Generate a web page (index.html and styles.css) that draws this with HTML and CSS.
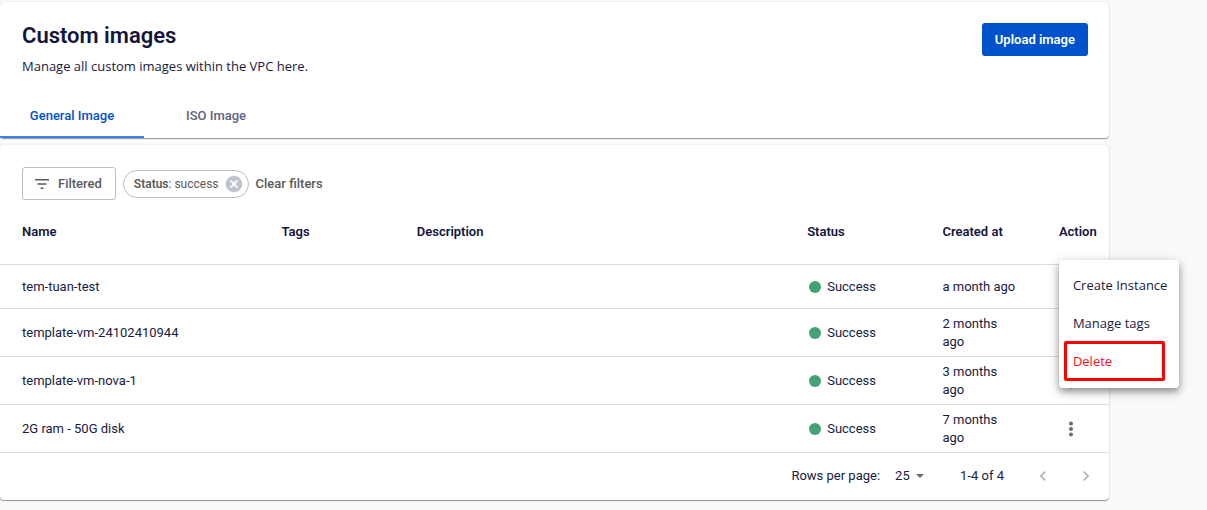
FILE: index.html
```html
<!DOCTYPE html>
<html lang="en">
<head>
  <meta charset="UTF-8">
  <meta name="viewport" content="width=device-width, initial-scale=1.0">
  <title>Custom images</title>
  <link rel="stylesheet" href="styles.css">
</head>
<body>
  <main class="page">
    <!-- Header -->
    <section class="card">
      <div class="header">
        <div>
          <h1>Custom images</h1>
          <p>Manage all custom images within the VPC here.</p>
        </div>
        <button class="btn-primary" type="button">Upload image</button>
      </div>
      <nav class="tabs">
        <a class="tab active" href="#general">General Image</a>
        <a class="tab" href="#iso">ISO Image</a>
      </nav>
    </section>

    <!-- Image list -->
    <section class="card">
      <div class="filters">
        <button class="btn-filter" type="button">
          <svg width="16" height="16" viewBox="0 0 16 16" fill="currentColor"><path d="M1 3h14v1.500H1zM3.500 7.200h9v1.500h-9zM6.500 11.500h3v1.500h-3z"/></svg>
          Filtered
        </button>
        <div class="chip">
          <span><b>Status</b>: success</span>
          <button class="chip-remove" type="button" aria-label="Remove filter">
            <svg width="18" height="18" viewBox="0 0 24 24" fill="currentColor"><path d="M12 1C5.900 1 1 5.900 1 12s4.900 11 11 11 11-4.900 11-11S18.100 1 12 1zm5.500 14.900l-1.600 1.600L12 13.600l-3.900 3.900-1.600-1.600 3.900-3.900-3.900-3.900 1.600-1.600 3.900 3.900 3.900-3.900 1.600 1.600-3.900 3.900z"/></svg>
          </button>
        </div>
        <button class="btn-text" type="button">Clear filters</button>
      </div>

      <table>
        <colgroup>
          <col class="col-name">
          <col class="col-tags">
          <col class="col-desc">
          <col class="col-status">
          <col class="col-created">
          <col>
        </colgroup>
        <thead>
          <tr>
            <th>Name</th>
            <th>Tags</th>
            <th>Description</th>
            <th>Status</th>
            <th>Created at</th>
            <th>Action</th>
          </tr>
        </thead>
        <tbody>
          <tr>
            <td>tem-tuan-test</td>
            <td></td>
            <td></td>
            <td><span class="status">Success</span></td>
            <td>a month ago</td>
            <td class="action">
              <button class="more" type="button" aria-label="Actions"><svg width="24" height="24" viewBox="0 0 24 24" fill="currentColor"><circle cx="12" cy="6.500" r="2"/><circle cx="12" cy="12" r="2"/><circle cx="12" cy="17.500" r="2"/></svg></button>
              <div class="menu">
                <button type="button">Create Instance</button>
                <button type="button">Manage tags</button>
                <button class="delete" type="button">Delete</button>
              </div>
            </td>
          </tr>
          <tr>
            <td>template-vm-24102410944</td>
            <td></td>
            <td></td>
            <td><span class="status">Success</span></td>
            <td>2 months ago</td>
            <td><button class="more" type="button" aria-label="Actions"><svg width="24" height="24" viewBox="0 0 24 24" fill="currentColor"><circle cx="12" cy="6.500" r="2"/><circle cx="12" cy="12" r="2"/><circle cx="12" cy="17.500" r="2"/></svg></button></td>
          </tr>
          <tr>
            <td>template-vm-nova-1</td>
            <td></td>
            <td></td>
            <td><span class="status">Success</span></td>
            <td>3 months ago</td>
            <td><button class="more" type="button" aria-label="Actions"><svg width="24" height="24" viewBox="0 0 24 24" fill="currentColor"><circle cx="12" cy="6.500" r="2"/><circle cx="12" cy="12" r="2"/><circle cx="12" cy="17.500" r="2"/></svg></button></td>
          </tr>
          <tr>
            <td>2G ram - 50G disk</td>
            <td></td>
            <td></td>
            <td><span class="status">Success</span></td>
            <td>7 months ago</td>
            <td><button class="more" type="button" aria-label="Actions"><svg width="24" height="24" viewBox="0 0 24 24" fill="currentColor"><circle cx="12" cy="6.500" r="2"/><circle cx="12" cy="12" r="2"/><circle cx="12" cy="17.500" r="2"/></svg></button></td>
          </tr>
        </tbody>
      </table>

      <!-- Pagination -->
      <div class="pagination">
        <label for="rows">Rows per page:</label>
        <div class="select">
          <select id="rows">
            <option>10</option>
            <option selected>25</option>
            <option>50</option>
          </select>
          <svg width="8" height="4" viewBox="0 0 8 4" fill="currentColor"><path d="M0 0h8L4 4z"/></svg>
        </div>
        <span class="range">1-4 of 4</span>
        <button class="arrow" type="button" aria-label="Previous page" disabled><svg width="20" height="20" viewBox="0 0 24 24" fill="currentColor"><path d="M15.400 7.400L14 6l-6 6 6 6 1.400-1.400L10.800 12z"/></svg></button>
        <button class="arrow" type="button" aria-label="Next page" disabled><svg width="20" height="20" viewBox="0 0 24 24" fill="currentColor"><path d="M8.600 16.600L10 18l6-6-6-6-1.400 1.400L13.200 12z"/></svg></button>
      </div>
    </section>
  </main>
</body>
</html>
```
FILE: styles.css
```css
* {
  box-sizing: border-box;
}
body {
  margin: 0;
  background-color: #fafafa;
  color: #172042;
  font-family: Roboto, sans-serif;
  font-size: 13px;
  line-height: 18px;
}
button {
  font: inherit;
  color: inherit;
  background: none;
  border: none;
  padding: 0;
  cursor: pointer;
}
svg {
  display: block;
}
.page {
  display: flex;
  flex-direction: column;
  gap: 7px;
  margin-right: 98px;
  padding: 2px 0 10px;
}
.card {
  background-color: #fff;
  border-radius: 4px;
  box-shadow: 0 1px 1px rgba(0, 0, 0, 0.4), 0 0 2px rgba(0, 0, 0, 0.12);
}

/* Header */
.header {
  display: flex;
  justify-content: space-between;
  align-items: flex-start;
  padding: 21px 21px 0 22px;
}
h1 {
  margin: 0;
  font-size: 22px;
  font-weight: 600;
  line-height: 26px;
  color: #12153d;
}
p {
  margin: 7px 0 0;
  font-family: "Open Sans", sans-serif;
  line-height: 20px;
}
.btn-primary {
  height: 33px;
  padding: 0 13px;
  border-radius: 3px;
  background-color: #0052cc;
  color: #fff;
  font-weight: 600;
}
.tabs {
  display: flex;
  margin-top: 17px;
}
.tab {
  width: 144px;
  height: 45px;
  padding-top: 14px;
  border-bottom: 2px solid transparent;
  color: #5e6282;
  font-weight: 500;
  text-align: center;
  text-decoration: none;
}
.tab.active {
  border-color: #3b82f0;
  color: #0052cc;
}

/* Filters */
.filters {
  display: flex;
  align-items: center;
  gap: 7px;
  padding: 22px 22px 0;
  color: #5a5a5a;
}
.btn-filter {
  display: flex;
  align-items: center;
  gap: 8px;
  height: 33px;
  padding: 0 13px 0 11px;
  border: 1px solid #bdbdc1;
  border-radius: 3px;
  font-weight: 500;
}
.chip {
  display: flex;
  align-items: center;
  gap: 6px;
  height: 28px;
  padding: 0 5px 0 10px;
  border: 1px solid #bdbdc1;
  border-radius: 14px;
  font-size: 12px;
}
.chip b {
  font-weight: 600;
}
.chip-remove {
  color: #c1c4ce;
}
.btn-text {
  font-weight: 500;
}

/* Table */
table {
  width: 100%;
  table-layout: fixed;
  border-collapse: collapse;
}
.col-name {
  width: 23.4%;
}
.col-tags, .col-status {
  width: 12.2%;
}
.col-desc {
  width: 35.2%;
}
.col-created {
  width: 10.5%;
}
th, td {
  padding: 6px 20px 5px 22px;
  border-bottom: 1px solid #dedede;
  text-align: left;
}
th {
  height: 64px;
  font-weight: 600;
  color: #12153d;
}
td {
  height: 44px;
}
th:last-child, td:last-child {
  padding-right: 0;
}
.status {
  display: flex;
  align-items: center;
  gap: 6px;
  padding-left: 2px;
}
.status::before {
  content: "";
  width: 12px;
  height: 12px;
  border-radius: 50%;
  background-color: #42a275;
}
.more {
  display: block;
  color: #6b6b6b;
}

/* Action menu */
.action {
  position: relative;
}
.menu {
  position: absolute;
  top: -5px;
  left: 22px;
  z-index: 1;
  display: flex;
  flex-direction: column;
  width: 120px;
  padding: 6px 0 8px;
  border-radius: 4px;
  background-color: #fff;
  box-shadow: 0 4px 6px rgba(0, 0, 0, 0.3), 0 3px 14px rgba(0, 0, 0, 0.2);
  font-family: "Open Sans", sans-serif;
}
.menu button {
  height: 38px;
  padding: 0 0 0 14px;
  text-align: left;
  white-space: nowrap;
}
.menu .delete {
  height: 40px;
  margin: -1px 14px -1px 5px;
  padding-left: 6px;
  border: 3px solid #ff0000;
  border-radius: 2px;
  color: #fa0f14;
}

/* Pagination */
.pagination {
  display: flex;
  justify-content: flex-end;
  align-items: center;
  height: 47px;
  padding-right: 13px;
}
.select {
  display: flex;
  align-items: center;
  margin: 0 36px 0 15px;
  color: #6b6b6b;
}
select {
  appearance: none;
  width: 29px;
  margin-right: -8px;
  padding: 0;
  border: none;
  background: none;
  color: #172042;
  font: inherit;
}
.select svg {
  pointer-events: none;
}
.range {
  margin-right: 29px;
}
.arrow {
  color: #b5b5b5;
}
.arrow + .arrow {
  margin-left: 23px;
}
```
